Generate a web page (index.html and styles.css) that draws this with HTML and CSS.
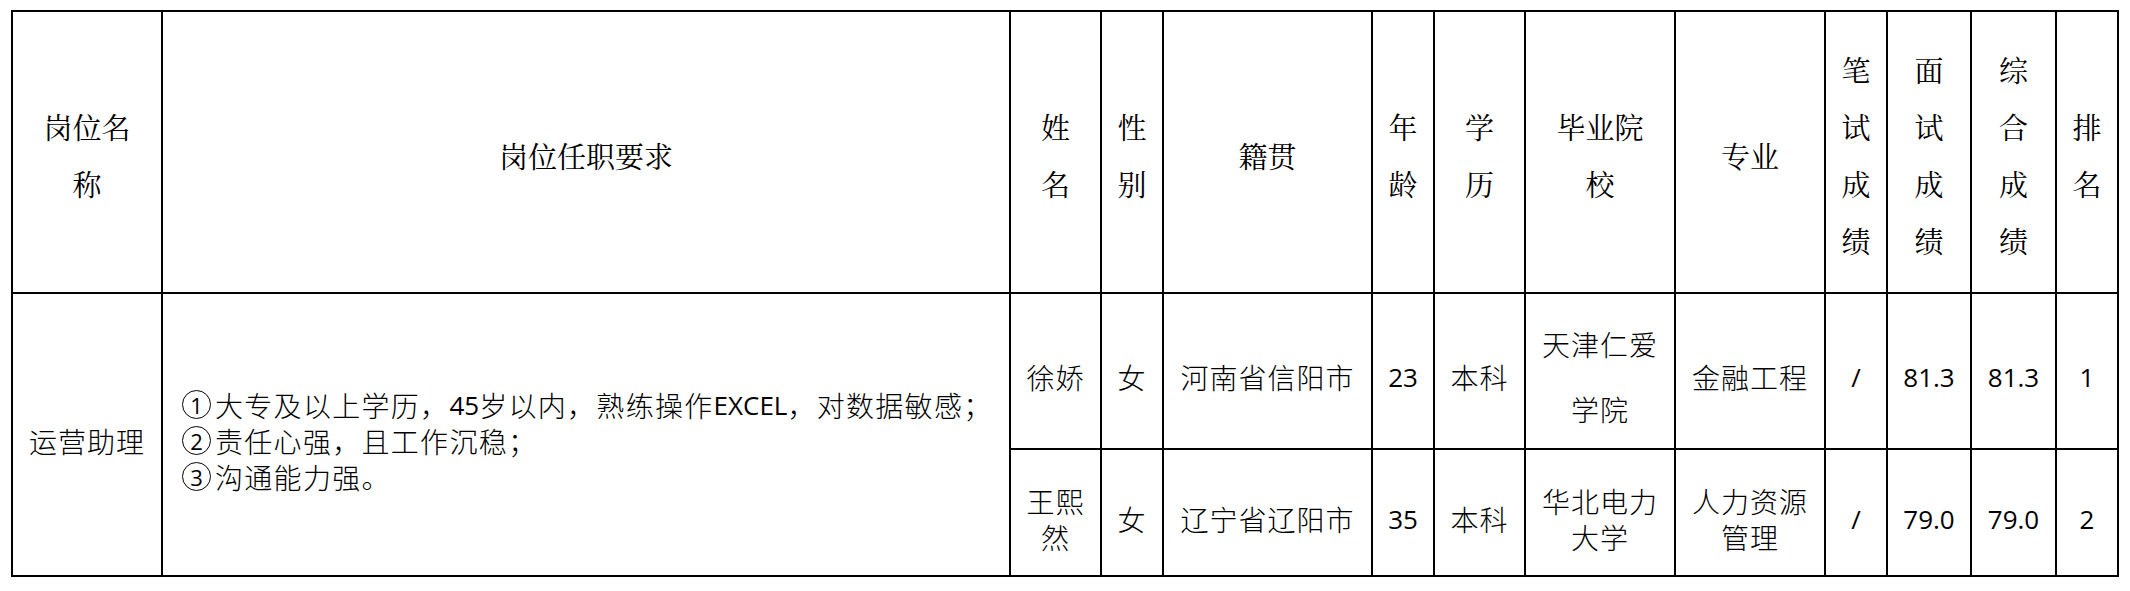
FILE: index.html
```html
<!DOCTYPE html>
<html lang="zh-CN">
<head>
<meta charset="utf-8">
<title>岗位成绩表</title>
<link rel="stylesheet" href="styles.css">
</head>
<body>
<table class="sheet">
  <colgroup>
    <col class="c-post">
    <col class="c-req">
    <col class="c-name">
    <col class="c-sex">
    <col class="c-origin">
    <col class="c-age">
    <col class="c-edu">
    <col class="c-school">
    <col class="c-major">
    <col class="c-written">
    <col class="c-interview">
    <col class="c-total">
    <col class="c-rank">
  </colgroup>
  <thead>
    <tr class="head-row">
      <th>岗位名<br>称</th>
      <th>岗位任职要求</th>
      <th>姓<br>名</th>
      <th>性<br>别</th>
      <th>籍贯</th>
      <th>年<br>龄</th>
      <th>学<br>历</th>
      <th>毕业院<br>校</th>
      <th>专业</th>
      <th>笔<br>试<br>成<br>绩</th>
      <th>面<br>试<br>成<br>绩</th>
      <th>综<br>合<br>成<br>绩</th>
      <th>排<br>名</th>
    </tr>
  </thead>
  <tbody>
    <tr class="row-one">
      <td rowspan="2" class="post">运营助理</td>
      <td rowspan="2" class="req">
        <div class="req-line"><span class="circ">1</span>大专及以上学历，<span class="num">45</span>岁以内，熟练操作<span class="num">EXCEL</span>，对数据敏感；</div>
        <div class="req-line"><span class="circ">2</span>责任心强，且工作沉稳；</div>
        <div class="req-line"><span class="circ">3</span>沟通能力强。</div>
      </td>
      <td>徐娇</td>
      <td>女</td>
      <td>河南省信阳市</td>
      <td class="num">23</td>
      <td>本科</td>
      <td class="tall">天津仁爱<br>学院</td>
      <td>金融工程</td>
      <td class="num">/</td>
      <td class="num">81.3</td>
      <td class="num">81.3</td>
      <td class="num">1</td>
    </tr>
    <tr class="row-two">
      <td>王熙<br>然</td>
      <td>女</td>
      <td>辽宁省辽阳市</td>
      <td class="num">35</td>
      <td>本科</td>
      <td>华北电力<br>大学</td>
      <td>人力资源<br>管理</td>
      <td class="num">/</td>
      <td class="num">79.0</td>
      <td class="num">79.0</td>
      <td class="num">2</td>
    </tr>
  </tbody>
</table>
</body>
</html>
```
FILE: styles.css
```css
html, body {
  margin: 0;
  padding: 0;
  background: #ffffff;
}

body {
  padding: 10px 0 0 11px;
}

.sheet {
  border-collapse: collapse;
  table-layout: fixed;
  width: 2108px;
  color: #000000;
}

.sheet th,
.sheet td {
  border: 2px solid #000000;
  padding: 0;
  text-align: center;
  vertical-align: middle;
  overflow: hidden;
}

.c-post { width: 150px; }
.c-req { width: 848px; }
.c-name { width: 91px; }
.c-sex { width: 62px; }
.c-origin { width: 209px; }
.c-age { width: 62px; }
.c-edu { width: 91px; }
.c-school { width: 150px; }
.c-major { width: 150px; }
.c-written { width: 62px; }
.c-interview { width: 84px; }
.c-total { width: 85px; }
.c-rank { width: 62px; }

.head-row { height: 282px; }

.sheet th {
  font-family: "Noto Serif CJK SC", "Noto Sans CJK SC", serif;
  font-weight: 400;
  font-size: 29px;
  line-height: 57px;
  padding-top: 6px;
}

.row-one { height: 156px; }
.row-two { height: 127px; }

.sheet td {
  font-family: "Noto Sans CJK SC", sans-serif;
  font-weight: 300;
  font-size: 28px;
  letter-spacing: 1px;
  line-height: 36px;
  padding-top: 12px;
}

.sheet td.req {
  text-align: left;
  padding-left: 19px;
  letter-spacing: 1.3px;
}

.req-line {
  display: flex;
  align-items: center;
  height: 36px;
  white-space: nowrap;
}

.circ {
  display: inline-flex;
  align-items: center;
  justify-content: center;
  box-sizing: border-box;
  width: 29px;
  height: 29px;
  margin-right: 4px;
  border: 1.6px solid #000000;
  border-radius: 50%;
  font-family: "Open Sans", "Liberation Sans", sans-serif;
  font-weight: 400;
  font-size: 22px;
  letter-spacing: 0;
  line-height: 1;
}

.sheet td.tall {
  line-height: 65px;
}

.sheet td.num,
.req .num {
  font-family: "Open Sans", "Liberation Sans", sans-serif;
  font-weight: 400;
  font-size: 26px;
  letter-spacing: 0;
}

.req .num {
  line-height: 1;
}
```
